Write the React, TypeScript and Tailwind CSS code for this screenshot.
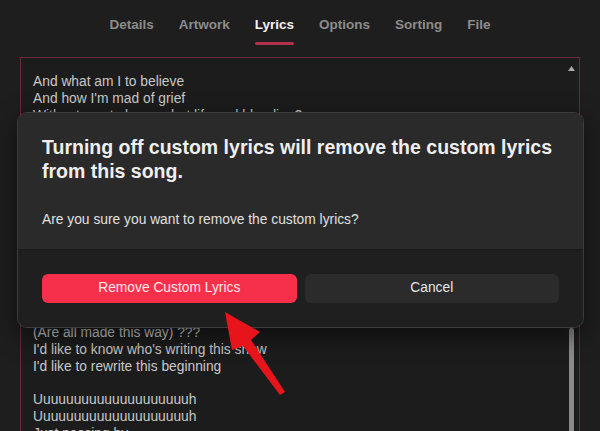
import React from "react";

const tabs = ["Details", "Artwork", "Lyrics", "Options", "Sorting", "File"];

const lyrics = [
  "And what am I to believe",
  "And how I'm mad of grief",
  "Without you to know what life and bleeding?",
  "I keep on asking why",
  "The stars are in the sky",
  "And no one answers me",
  "",
  "So tell me what to see",
  "And tell me who to be",
  "I wonder if we all",
  "Were never meant to fall",
  "",
  "Oh, everyone I know",
  "And everyone I see",
  "Are they the same as me",
  "(Are all made this way) ???",
  "I'd like to know who's writing this show",
  "I'd like to rewrite this beginning",
  "",
  "Uuuuuuuuuuuuuuuuuuuuh",
  "Uuuuuuuuuuuuuuuuuuuuh",
  "Just passing by",
  "",
];

function Tabs() {
  return (
    <nav className="flex justify-center gap-[25px] pt-[16px]">
      {tabs.map((tab) => {
        const active = tab === "Lyrics";
        return (
          <div key={tab} className="flex flex-col">
            <span
              className={
                active
                  ? "text-[13.5px] font-bold leading-[18px] text-[#f2f2f2]"
                  : "text-[13.5px] font-bold leading-[18px] text-[#8c8c8c]"
              }
            >
              {tab}
            </span>
            <span
              className={
                active
                  ? "mt-[8px] h-[3px] rounded-full bg-[#b3304a]"
                  : "mt-[8px] h-[3px]"
              }
            />
          </div>
        );
      })}
    </nav>
  );
}

function LyricsBox() {
  return (
    <div className="mx-[20px] mt-[12px] flex h-[390px] border border-[#6a2a3a] bg-[#1c1c1c]">
      <div className="flex-1 pl-[12px] pt-[16px] text-[13.8px] leading-[16.75px] text-[#c8c8c8]">
        {lyrics.map((line, i) => (
          <div key={i} className="h-[16.75px] whitespace-nowrap">
            {line}
          </div>
        ))}
      </div>
      <div className="mr-[2px] flex w-[12px] flex-col items-center">
        <svg width="7" height="5" viewBox="0 0 7 5" className="mt-[8px]">
          <path d="M3.5 0 L7 5 L0 5 Z" fill="#a8a8a8" />
        </svg>
        <div className="flex-1" />
        <div className="h-[118px] w-[5px] rounded-t-[2px] bg-[#8a8a8a]" />
      </div>
    </div>
  );
}

function ConfirmDialog() {
  return (
    <div className="absolute left-[17px] top-[112px] flex h-[216px] w-[567px] flex-col overflow-hidden rounded-[10px] border border-[#3b3b3b] shadow-[0_8px_24px_rgba(0,0,0,0.55)]">
      <div className="h-[136px] bg-[#2a2a2a] px-[24px] pt-[22px]">
        <h2 className="text-[19.5px] font-bold leading-[24px] text-[#efefef]">
          Turning off custom lyrics will remove the custom lyrics from this
          song.
        </h2>
        <p className="mt-[28px] text-[13.8px] leading-[17px] text-[#e0e0e0]">
          Are you sure you want to remove the custom lyrics?
        </p>
      </div>
      <div className="flex flex-1 gap-[8px] border-t border-[#1a1a1a] bg-[#1f1f1f] px-[24px] pt-[24px]">
        <button className="h-[29px] flex-1 rounded-[6px] bg-[#f6304b] text-[13.8px] text-[#fbe9ec]">
          Remove Custom Lyrics
        </button>
        <button className="h-[29px] flex-1 rounded-[6px] bg-[#2b2b2b] text-[13.8px] text-[#e6e6e6]">
          Cancel
        </button>
      </div>
    </div>
  );
}

function Pointer() {
  return (
    <svg
      className="pointer-events-none absolute left-0 top-0"
      width="600"
      height="431"
      viewBox="0 0 600 431"
    >
      <polygon
        points="225,312 260,332 251,340 285,392 280,395 243,346 232,350"
        fill="#e8141c"
      />
    </svg>
  );
}

export default function App() {
  return (
    <div className="relative h-[431px] w-[600px] overflow-hidden bg-[#1e1e1e] font-['Liberation_Sans',Arial,sans-serif]">
      <Tabs />
      <LyricsBox />
      <ConfirmDialog />
      <Pointer />
    </div>
  );
}
